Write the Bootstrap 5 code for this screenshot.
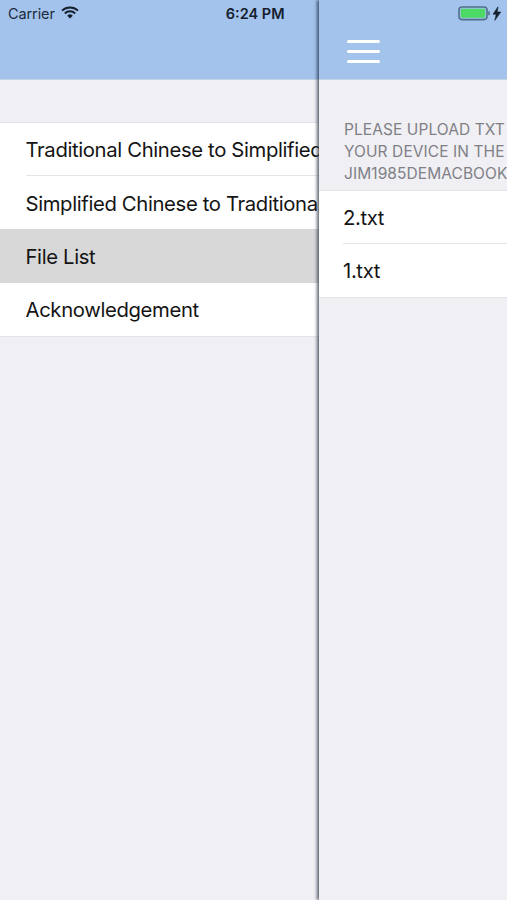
<!DOCTYPE html>
<html lang="en">
<head>
<meta charset="utf-8">
<title>File List</title>
<link href="https://cdn.jsdelivr.net/npm/bootstrap@5.3.0/dist/css/bootstrap.min.css" rel="stylesheet">
<style>
html,body{height:100%;margin:0}
body{background:#efeff4;font-family:Inter,"Liberation Sans",sans-serif;color:#111}
.stage{width:507px;height:900px;overflow:hidden}
.pane-left{width:319px;flex:none;background:#efeff4}
.pane-right{width:188px;flex:none;background:#efeff4;box-shadow:-2px 0 3px rgba(30,40,60,.7);z-index:1;position:relative}
.topbar{height:80px;background:#a3c3ec;border-bottom:1px solid #c5d3e6;flex:none}
.status{height:28px;color:#1c2a3c}
.carrier{font-size:14.5px;letter-spacing:-.1px}
.wifi{margin:-3px 0 0 6px;flex:none}
.clock{font-weight:600;font-size:14.5px;margin-left:147px;color:#14202e}
.spacer-left{height:41.7px;flex:none}
.menu-list{border-top:1px solid #e4e4e8;border-bottom:1px solid #e4e4e8;border-radius:0;background:#fff}
.menu-list .list-group-item{height:53.4px;padding:0;background:transparent;border:0;font-size:20.3px;letter-spacing:-.36px;color:#141414;white-space:nowrap;overflow:hidden;display:flex;align-items:center}
.menu-list .row-inner{margin-left:25.5px;padding-top:2px;flex:1;height:100%;display:flex;align-items:center;border-bottom:1px solid #e6e6ea;overflow:hidden}
.menu-list .list-group-item:last-child .row-inner,.menu-list .row-plain .row-inner{border-bottom:0}
.menu-list .list-group-item.row-on{background:#d8d8d8}
.hamburger{width:33px;height:23px;margin:40px 0 0 28px;display:flex;flex-direction:column;justify-content:space-between}
.hamburger i{display:block;height:3px;background:#fff;border-radius:2px}
.hint{height:110px;padding:39px 0 0 25px;font-size:15.5px;line-height:22px;color:#808086;white-space:nowrap;overflow:hidden;letter-spacing:.08px;flex:none}
.battery-wrap{position:absolute;top:6px;left:139px}
.pane-right .menu-list .list-group-item{height:53px}
.pane-right .menu-list .row-inner{margin-left:24px}
</style>
</head>
<body>
<div class="stage d-flex">
  <div class="pane-left d-flex flex-column">
    <div class="topbar">
      <div class="status d-flex align-items-center ps-2">
        <span class="carrier">Carrier</span>
        <svg class="wifi" width="18" height="13" viewBox="0 0 18 13" aria-hidden="true"><path d="M1 4.6a11.6 11.6 0 0 1 16 0" fill="none" stroke="#14202e" stroke-width="2"/><path d="M3.8 7.4a7.6 7.6 0 0 1 10.4 0" fill="none" stroke="#14202e" stroke-width="2"/><path d="M9 12.6 6.2 9.7a4 4 0 0 1 5.6 0z" fill="#14202e"/></svg>
        <span class="clock">6:24 PM</span>
      </div>
    </div>
    <div class="spacer-left"></div>
    <div class="list-group list-group-flush menu-list">
      <div class="list-group-item"><div class="row-inner">Traditional Chinese to Simplified</div></div>
      <div class="list-group-item row-plain"><div class="row-inner">Simplified Chinese to Traditional</div></div>
      <div class="list-group-item row-on row-plain"><div class="row-inner">File List</div></div>
      <div class="list-group-item"><div class="row-inner">Acknowledgement</div></div>
    </div>
  </div>
  <div class="pane-right d-flex flex-column">
    <div class="topbar">
      <div class="hamburger" aria-label="Menu"><i></i><i></i><i></i></div>
      <div class="battery-wrap">
        <svg class="d-block" width="46" height="15" viewBox="0 0 46 15" aria-hidden="true"><rect x="1" y="1" width="28" height="12.6" rx="3" fill="none" stroke="#4f6f88" stroke-width="1.6"/><rect x="2.8" y="2.8" width="24.4" height="9" rx="1.5" fill="#4cd964"/><rect x="30.2" y="5.4" width="1.6" height="3.8" fill="#4f6f88"/><path d="M40 .8 35 8.2h3.2L36.8 14.4 42.8 6h-3.6z" fill="#14202e" stroke="#14202e" stroke-width=".6"/></svg>
      </div>
    </div>
    <div class="hint">PLEASE UPLOAD TXT<br>YOUR DEVICE IN THE<br>JIM1985DEMACBOOK</div>
    <div class="list-group list-group-flush menu-list">
      <div class="list-group-item"><div class="row-inner">2.txt</div></div>
      <div class="list-group-item"><div class="row-inner">1.txt</div></div>
    </div>
  </div>
</div>
<script src="https://cdn.jsdelivr.net/npm/bootstrap@5.3.0/dist/js/bootstrap.bundle.min.js"></script>
</body>
</html>
